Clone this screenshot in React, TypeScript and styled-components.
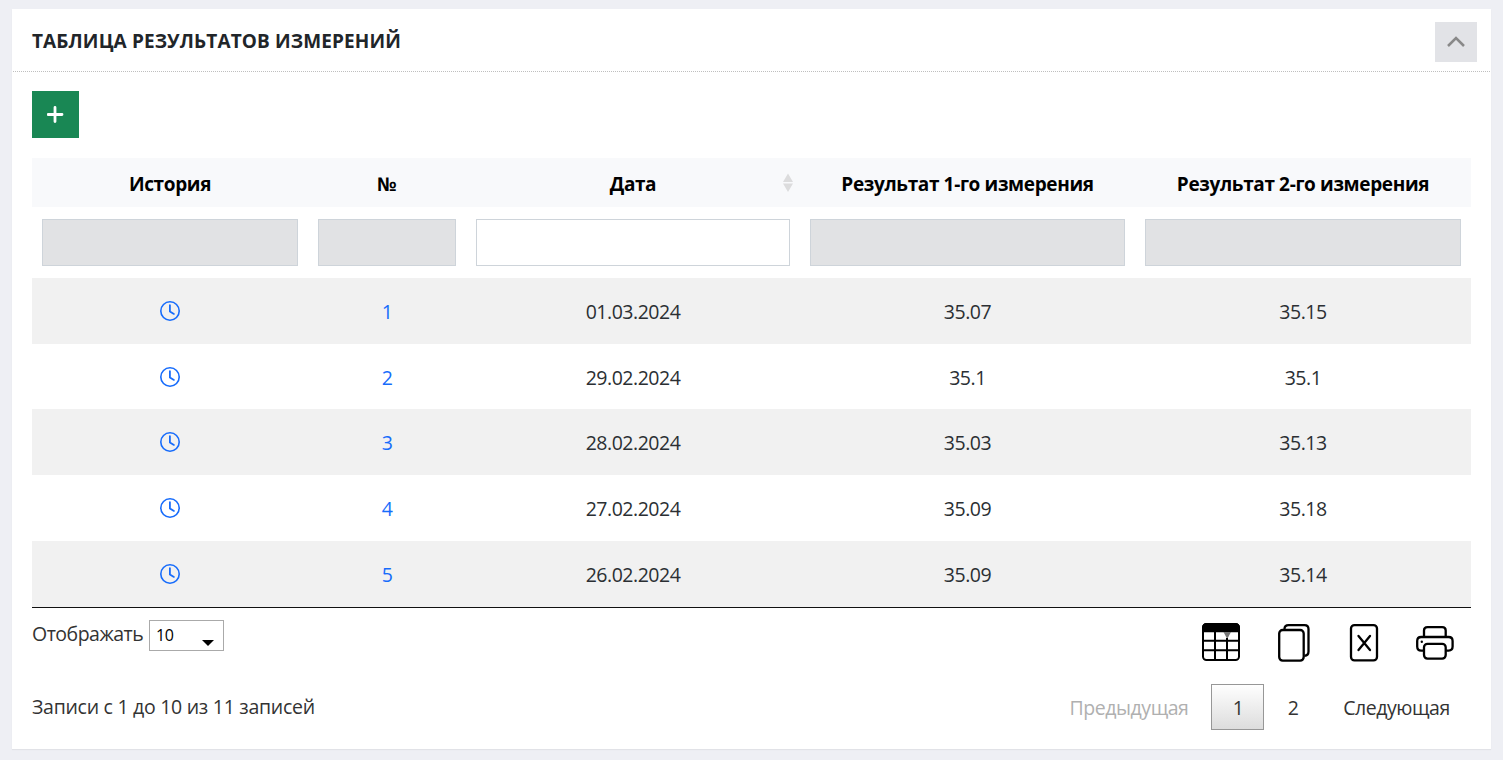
import React from 'react';
import styled, { createGlobalStyle } from 'styled-components';

const GlobalStyle = createGlobalStyle`
  * { box-sizing: border-box; }
  body {
    margin: 0;
    background: #eeeff4;
    font-family: 'Open Sans', 'Noto Sans', sans-serif;
    font-size: 19.5px;
    color: #2b2f33;
  }
  button, select, input { font-family: inherit; }
`;

const Page = styled.main`
  height: 760px;
  padding: 9px 12px 11px;
  overflow: hidden;
`;

const Panel = styled.section`
  height: 740px;
  background: #fff;
  box-shadow: 0 1px 1px rgba(0, 0, 0, 0.05);
`;

const PanelHeader = styled.header`
  display: flex;
  justify-content: space-between;
  align-items: flex-start;
  height: 63px;
  margin: 0 1px;
  padding: 13px 13px 0 19px;
  border-bottom: 1px dotted #bfbfbf;
`;

const Title = styled.h2`
  margin: 0;
  color: #212529;
  font-size: 19px;
  line-height: 38px;
  font-weight: 700;
  letter-spacing: 0.12px;
  white-space: nowrap;
`;

const CollapseButton = styled.button`
  display: grid;
  place-items: center;
  width: 42px;
  height: 40px;
  padding: 0;
  border: 0;
  background: #e2e3e7;
`;

const PanelBody = styled.div`
  padding: 19px 20px 0;
`;

const AddButton = styled.button`
  display: grid;
  place-items: center;
  width: 47px;
  height: 47px;
  padding: 0;
  border: 0;
  background: #198754;
`;

const Table = styled.div`
  margin-top: 20px;
  border-bottom: 1px solid #111;
`;

const TableBody = styled.div`
  height: 329px;
`;

const Row = styled.div`
  display: grid;
  grid-template-columns: 276px 158px 334px 335px 336px;
`;

const HeadRow = styled(Row)`
  height: 49px;
  background: #f8f9fb;
  color: #000;
`;

const HeadCell = styled.div<{ $spacing: number }>`
  display: flex;
  position: relative;
  align-items: center;
  justify-content: center;
  padding-top: 3px;
  font-size: 19px;
  font-weight: 700;
  letter-spacing: ${(p) => p.$spacing}px;
  white-space: nowrap;
`;

const SortIcon = styled.svg`
  position: absolute;
  right: 6px;
  top: 15px;
`;

const FilterRow = styled(Row)`
  height: 71px;
  padding-top: 12px;
`;

const FilterInput = styled.input`
  height: 47px;
  min-width: 0;
  margin: 0 10px;
  padding: 6px 10px;
  border: 1px solid #ced4da;
  border-radius: 0;
  background: #fff;
  &:disabled { background: #e1e2e4; }
`;

const DataRow = styled(Row)`
  height: 65.7px;
  &:nth-child(odd) { background: #f1f1f1; }
  &:last-child { height: 66.2px; }
`;

const Cell = styled.div`
  display: flex;
  align-items: center;
  justify-content: center;
  padding-top: 1.5px;
  letter-spacing: -0.47px;
  svg { margin-top: -1px; }
`;

const Link = styled.a`
  color: #176cfb;
  text-decoration: none;
`;

const Controls = styled.div`
  display: flex;
  justify-content: space-between;
  height: 76px;
  padding-top: 12px;
  color: #333;
`;

const Length = styled.label`
  display: flex;
  gap: 6px;
  height: 31px;
  line-height: 28px;
  letter-spacing: -0.5px;
`;

const LengthLabel = styled.span`
  width: 111px;
  white-space: nowrap;
`;

const LengthSelect = styled.span`
  display: flex;
  justify-content: space-between;
  width: 75px;
  padding: 0 9px 0 6px;
  border: 1px solid #aaa;
  color: #000;
  font-size: 16px;
  line-height: 29px;
  letter-spacing: -0.3px;
  svg { margin-top: 19px; }
`;

const Exports = styled.div`
  display: flex;
  padding: 3px 16px 0 0;
  color: #000;
`;

const ExportButton = styled.button<{ $width: number; $gap?: number }>`
  width: ${(p) => p.$width}px;
  height: 40px;
  margin-left: ${(p) => p.$gap ?? 0}px;
  padding: 0;
  border: 0;
  background: none;
  svg { display: block; }
`;

const Footer = styled.footer`
  display: flex;
  justify-content: space-between;
  height: 46px;
  color: #333;
  line-height: 46px;
  white-space: nowrap;
`;

const Info = styled.span`
  letter-spacing: -0.28px;
`;

const Pager = styled.nav`
  display: flex;
`;

const PageLink = styled.a<{ $width: number; $state?: 'current' | 'disabled' }>`
  width: ${(p) => p.$width}px;
  padding: 1px 0 0 1px;
  border: 1px solid ${(p) => (p.$state === 'current' ? '#979797' : 'transparent')};
  background: ${(p) => (p.$state === 'current' ? 'linear-gradient(#fff, #dcdcdc) border-box' : 'none')};
  color: ${(p) => (p.$state === 'disabled' ? '#b0b0b0' : '#333')};
  text-align: center;
  line-height: 44px;
  letter-spacing: -0.45px;
`;

const ClockIcon = () => (
  <svg width="20" height="20" viewBox="0 0 20 20" fill="none" stroke="#176cfb">
    <circle cx="10" cy="10" r="9.2" strokeWidth="1.6" />
    <path d="M9.900 4.200v6.200l4 2.500" strokeWidth="1.800" strokeLinecap="round" strokeLinejoin="round" />
  </svg>
);

const TableIcon = () => (
  <svg width="38" height="40" viewBox="0 0 38 40" fill="none" stroke="#000" strokeWidth="2">
    <rect x="1" y="1" width="36" height="36" rx="3.500" />
    <path d="M1 8.200V5q0-4 4-4h28q4 0 4 4v3.200z" fill="#000" />
    <path d="M21.500 9h7.500l-3.750 7z" fill="#777" stroke="none" />
    <path d="M1 17.700h36M1 27.300h36M13 9v28M25 15v22" />
  </svg>
);

const CopyIcon = () => (
  <svg width="32" height="40" viewBox="0 0 32 40" fill="none" stroke="#000" strokeWidth="2.300">
    <rect x="1.200" y="7" width="24.500" height="30.600" rx="3.500" />
    <path d="M6.500 6.500V6q0-3.900 4-3.900h16q4 0 4 4v22.500q0 4-4 4.200" />
  </svg>
);

const ExcelIcon = () => (
  <svg width="30" height="40" viewBox="0 0 30 40" fill="none" stroke="#000" strokeWidth="2.300">
    <rect x="2" y="2.100" width="26" height="35.300" rx="3.500" />
    <path d="M9.500 13l11.500 14M21 13L9.500 27" strokeLinecap="round" />
  </svg>
);

const PrintIcon = () => (
  <svg width="39" height="40" viewBox="0 0 39 40" fill="none" stroke="#000" strokeWidth="2.300">
    <path d="M8 14V7.600q0-3.400 3.500-3.400h14.700q3.500 0 3.500 3.400V14" />
    <path d="M7.500 27.600H5.200q-4 0-4-4V18q0-4 4-4h27.400q4 0 4 4v5.600q0 4-4 4h-2.500" />
    <rect x="8" y="20.800" width="21.700" height="14.800" rx="3.500" />
    <circle cx="5.800" cy="18.800" r="1.200" fill="#000" stroke="none" />
  </svg>
);

const columns = [
  { label: 'История', spacing: -0.35 },
  { label: '№', spacing: 0 },
  { label: 'Дата', spacing: -0.4, sortable: true },
  { label: 'Результат 1-го измерения', spacing: -0.36 },
  { label: 'Результат 2-го измерения', spacing: -0.36 },
];

const rows = [
  ['01.03.2024', '35.07', '35.15'],
  ['29.02.2024', '35.1', '35.1'],
  ['28.02.2024', '35.03', '35.13'],
  ['27.02.2024', '35.09', '35.18'],
  ['26.02.2024', '35.09', '35.14'],
];

export default function App() {
  return (
    <>
      <GlobalStyle />
      <Page>
        <Panel>
          <PanelHeader>
            <Title>ТАБЛИЦА РЕЗУЛЬТАТОВ ИЗМЕРЕНИЙ</Title>
            <CollapseButton>
              <svg width="20" height="12" viewBox="0 0 20 12" fill="none" stroke="#898989" strokeWidth="2.500">
                <path d="M2 10l8-8 8 8" />
              </svg>
            </CollapseButton>
          </PanelHeader>
          <PanelBody>
            <AddButton>
              <svg width="17" height="17" viewBox="0 0 17 17" stroke="#fff" strokeWidth="2.800" strokeLinecap="round">
                <path d="M8 1.500v14M1 8.500h14" />
              </svg>
            </AddButton>
            <Table>
              <HeadRow>
                {columns.map((c) => (
                  <HeadCell key={c.label} $spacing={c.spacing}>
                    {c.label}
                    {c.sortable && (
                      <SortIcon width="12" height="20" viewBox="0 0 12 20" fill="#dcdcdd">
                        <path d="M6 .5l5 8.500H1zM1 10.500h10L6 19z" />
                      </SortIcon>
                    )}
                  </HeadCell>
                ))}
              </HeadRow>
              <FilterRow>
                {columns.map((c) => (
                  <FilterInput key={c.label} disabled={!c.sortable} />
                ))}
              </FilterRow>
              <TableBody>
                {rows.map((values, i) => (
                  <DataRow key={values[0]}>
                    <Cell><ClockIcon /></Cell>
                    <Cell><Link>{i + 1}</Link></Cell>
                    {values.map((v, j) => <Cell key={j}>{v}</Cell>)}
                  </DataRow>
                ))}
              </TableBody>
            </Table>
            <Controls>
              <Length>
                <LengthLabel>Отображать</LengthLabel>
                <LengthSelect>
                  10
                  <svg width="12" height="6" viewBox="0 0 12 6"><path d="M0 0h12L6 6z" /></svg>
                </LengthSelect>
              </Length>
              <Exports>
                <ExportButton $width={38}><TableIcon /></ExportButton>
                <ExportButton $width={32} $gap={38}><CopyIcon /></ExportButton>
                <ExportButton $width={30} $gap={39}><ExcelIcon /></ExportButton>
                <ExportButton $width={39} $gap={37}><PrintIcon /></ExportButton>
              </Exports>
            </Controls>
            <Footer>
              <Info>Записи с 1 до 10 из 11 записей</Info>
              <Pager>
                <PageLink $width={165} $state="disabled">Предыдущая</PageLink>
                <PageLink $width={53} $state="current">1</PageLink>
                <PageLink $width={57}>2</PageLink>
                <PageLink $width={150}>Следующая</PageLink>
              </Pager>
            </Footer>
          </PanelBody>
        </Panel>
      </Page>
    </>
  );
}
